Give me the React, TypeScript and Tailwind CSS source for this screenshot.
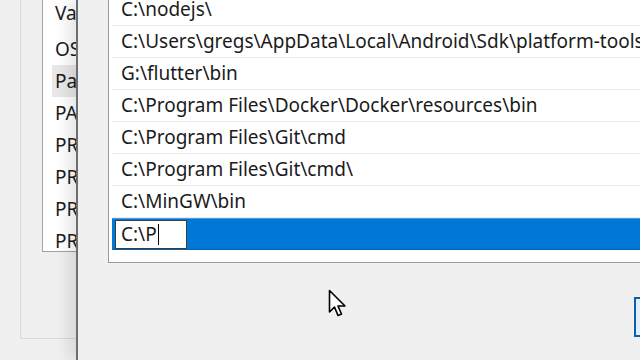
const paths = [
  "C:\\nodejs\\",
  "C:\\Users\\gregs\\AppData\\Local\\Android\\Sdk\\platform-tools",
  "G:\\flutter\\bin",
  "C:\\Program Files\\Docker\\Docker\\resources\\bin",
  "C:\\Program Files\\Git\\cmd",
  "C:\\Program Files\\Git\\cmd\\",
  "C:\\MinGW\\bin",
];

const vars = ["OS", "Path", "PATHEXT", "PROCESSOR_ARCHITECTURE", "PROCESSOR_IDENTIFIER", "PROCESSOR_LEVEL", "PROCESSOR_REVISION"];

function Cursor() {
  return (
    <svg className="absolute left-[328px] top-[289px]" width="20" height="30" viewBox="0 0 20 30">
      <path
        d="M1.5 1.5 L1.5 23 L6.5 18 L10 26.5 L13.5 25 L10 17 L17 17 Z"
        fill="#fff"
        stroke="#000"
        strokeWidth="1.6"
        strokeLinejoin="round"
      />
    </svg>
  );
}

export default function App() {
  return (
    <div
      className="relative flex w-[640px] h-[360px] overflow-hidden bg-[#f0f0f0] text-[19px] text-[#1b1b1b]"
      style={{ fontFamily: '"Noto Sans", "Open Sans", sans-serif' }}
    >
      {/* window behind */}
      <div className="w-[76px] h-full shrink-0">
        <div className="ml-[20px] h-[339px] border-l border-b border-[#d9d9d9]">
          <div className="ml-[21px] h-[252px] border-l border-b border-[#a3a3a3] bg-white overflow-hidden">
            <div className="-mt-[6px] flex flex-col whitespace-nowrap">
              <div className="h-[39px] flex items-center pl-[12px]">Variable</div>
              {vars.map((v) => (
                <div
                  key={v}
                  className={
                    v === "Path"
                      ? "h-[32px] flex items-center ml-[9px] pl-[3px] bg-[#e8e8e8]"
                      : "h-[32px] flex items-center pl-[12px]"
                  }
                >
                  {v}
                </div>
              ))}
            </div>
          </div>
        </div>
      </div>

      {/* edit environment variable dialog */}
      <div className="flex-1 h-full border-l-2 border-[#6e6e6e] shadow-[-8px_0_14px_rgba(0,0,0,0.10)] bg-[#f0f0f0] overflow-hidden">
        <div className="ml-[30px] w-[620px] h-[263px] border-l border-b border-[#9a9a9a] bg-white overflow-hidden">
          <div className="-mt-[6px] flex flex-col whitespace-nowrap">
            {paths.map((p) => (
              <div key={p} className="ml-[3px] h-[32px] border-b border-[#ececec] flex items-center pl-[9px]">
                {p}
              </div>
            ))}
            <div className="ml-[3px] h-[32px] flex items-center bg-[#0078d7] border-t border-[#4a9be0] border-b border-b-[#0062b3]">
              <div className="ml-[3px] w-[72px] h-[29px] border border-[#3c3c3c] bg-white flex items-center pl-[5px]">
                <span>C:\P</span>
                <span className="w-px h-[21px] bg-black ml-px" />
              </div>
            </div>
          </div>
        </div>
        <div className="pl-[556px] pt-[34px]">
          <div className="w-[80px] h-[40px] border-2 border-[#0f5fa8] bg-[#e1eefb]" />
        </div>
      </div>

      <Cursor />
    </div>
  );
}
